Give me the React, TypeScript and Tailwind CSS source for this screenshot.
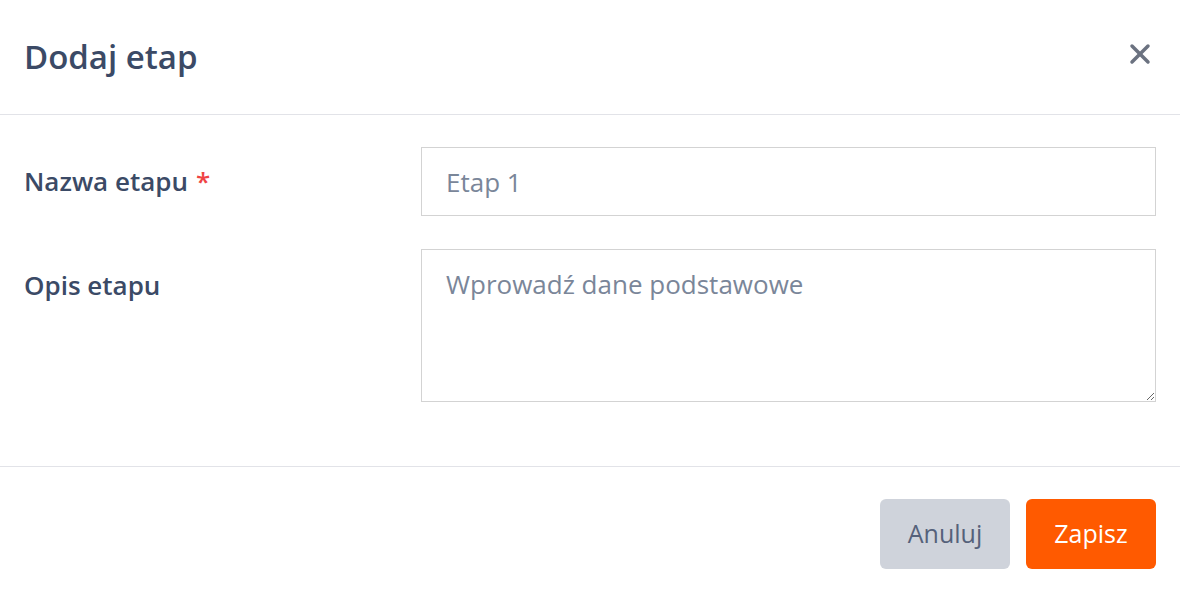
import React from "react";

const CloseIcon = () => (
    <svg width="22" height="22" viewBox="0 0 22 22" fill="none">
        <line x1="3" y1="3" x2="19" y2="19" stroke="#6b7280" strokeWidth="3.5" strokeLinecap="round" />
        <line x1="19" y1="3" x2="3" y2="19" stroke="#6b7280" strokeWidth="3.5" strokeLinecap="round" />
    </svg>
);

const App: React.FC = () => {
    return (
        <div className="w-[1180px] h-[590px] bg-white font-['Open_Sans',sans-serif] text-[#3b4a66]">
            <div className="flex items-center justify-between h-[115px] pl-[24px] pr-[29px] border-b border-[#e2e3e8]">
                <h2 className="text-[33px] font-semibold leading-none -mt-[2px]">Dodaj etap</h2>
                <button className="p-0 -mt-[6px]">
                    <CloseIcon />
                </button>
            </div>

            <div className="pl-[24px] pr-[24px] pt-[32px] pb-[64px] border-b border-[#e2e3e8]">
                <div className="grid grid-cols-[397px_1fr] gap-y-[33px]">
                    <div className="flex items-center h-[69px] text-[26px] font-semibold">
                        Nazwa etapu <span className="text-[#ef4444] ml-[8px]">*</span>
                    </div>
                    <input
                        className="h-[69px] w-full border border-[#d3d3d3] px-[24px] text-[26px] outline-none placeholder:text-[#7a8699]"
                        placeholder="Etap 1"
                    />

                    <div className="flex items-center h-[72px] text-[26px] font-semibold">Opis etapu</div>
                    <textarea
                        className="h-[153px] w-full border border-[#d3d3d3] px-[24px] pt-[16px] text-[26px] leading-[36px] outline-none placeholder:text-[#7a8699]"
                        placeholder="Wprowadź dane podstawowe"
                    />
                </div>
            </div>

            <div className="flex justify-end gap-[16px] pt-[32px] pr-[24px]">
                <button className="w-[130px] h-[70px] rounded-[6px] bg-[#cfd3db] text-[#55617a] text-[25px]">
                    Anuluj
                </button>
                <button className="w-[130px] h-[70px] rounded-[6px] bg-[#ff5a00] text-white text-[25px]">
                    Zapisz
                </button>
            </div>
        </div>
    );
};

export default App;
